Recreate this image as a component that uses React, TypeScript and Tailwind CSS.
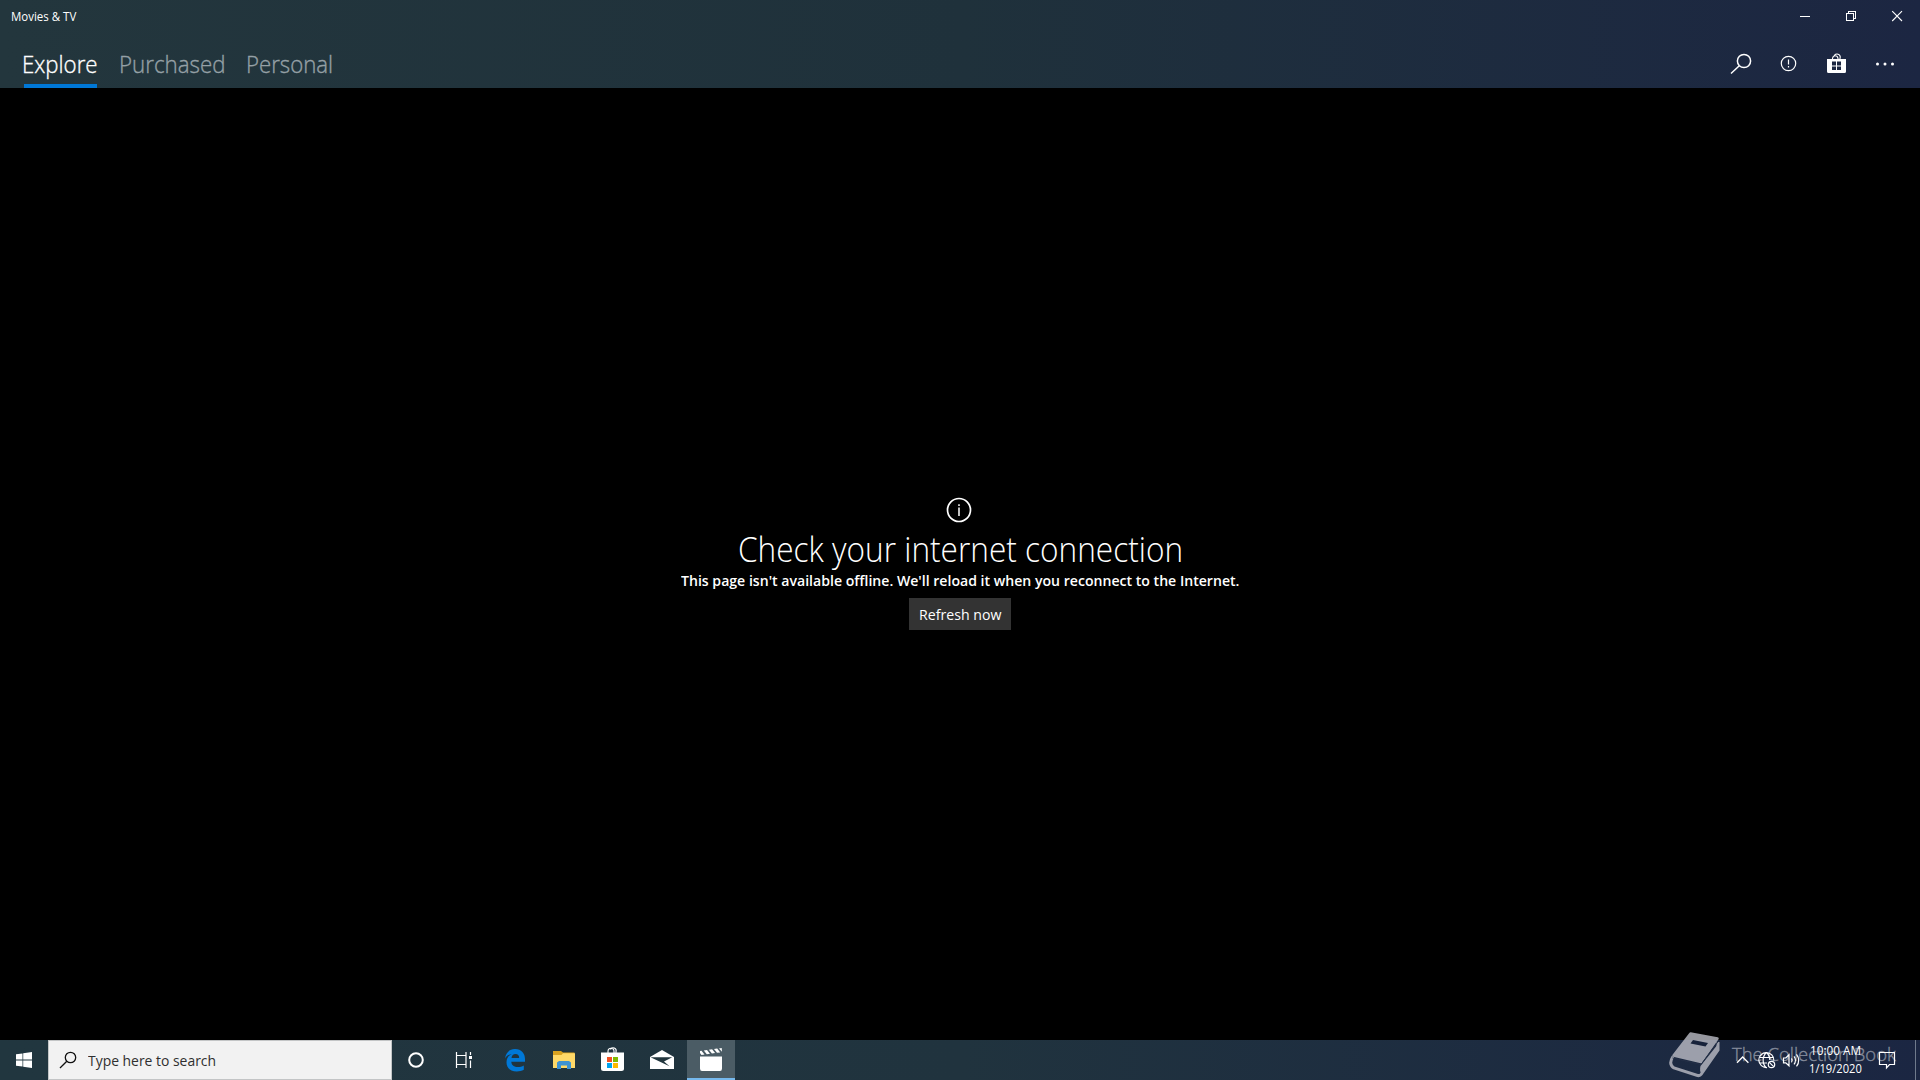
import { useLayoutEffect, useRef, useState } from "react";
import type { ReactNode } from "react";

/* Single-line label condensed or widened to an exact advance width. */
function Label({ width, className = "", children }: { width: number; className?: string; children: ReactNode }) {
  const ref = useRef<HTMLSpanElement>(null);
  const [scale, setScale] = useState(1);
  useLayoutEffect(() => {
    if (ref.current) setScale(width / ref.current.offsetWidth);
  }, [width]);
  return (
    <span className={"block shrink-0 whitespace-nowrap " + className} style={{ width }}>
      <span ref={ref} className="inline-block origin-left align-top" style={{ transform: `scaleX(${scale})` }}>
        {children}
      </span>
    </span>
  );
}

function TitleBar() {
  return (
    <div className="flex h-8 items-center justify-between pl-[11px]">
      <Label width={65} className="pt-px text-[12px] leading-8">Movies &amp; TV</Label>
      <div className="flex h-8">
        <svg width="46" height="32" fill="none" stroke="#fff" shapeRendering="crispEdges">
          <path d="M18 16.5h10" />
        </svg>
        <svg width="46" height="32" fill="none" stroke="#fff" shapeRendering="crispEdges">
          <path d="M18.5 13.5h7v7h-7zM20.5 13v-1.500h7v7h-1.500" />
        </svg>
        <svg width="46" height="32" fill="none" stroke="#fff" strokeWidth="1.1">
          <path d="M18.200 11.200l9.800 9.800M28 11.200l-9.800 9.800" />
        </svg>
      </div>
    </div>
  );
}

function Nav() {
  return (
    <nav className="mt-2 flex h-12 items-start justify-between pl-[22px]">
      <div className="flex text-[24px] leading-[48px] font-light text-[#95a0a6] [-webkit-text-stroke:0.35px]">
        <div className="relative mr-[21px] text-white">
          <Label width={76}>Explore</Label>
          <div className="absolute bottom-0 left-[2px] h-1 w-[73px] bg-[#0078d7]" />
        </div>
        <Label width={106} className="mr-[21px]">Purchased</Label>
        <Label width={87}>Personal</Label>
      </div>
      <div className="flex">
        <svg width="48" height="48" fill="none" stroke="#fff" strokeWidth="1.500">
          <circle cx="28" cy="21" r="6.600" />
          <path d="M23.300 25.800L15 33.500" />
        </svg>
        <svg width="48" height="48" fill="none" stroke="#fff" strokeWidth="1.200">
          <circle cx="24.500" cy="23.500" r="7.200" />
          <path d="M24.500 19.500v5M24.500 26v1.500" />
        </svg>
        <svg width="48" height="48" fill="none">
          <path d="M20.500 20v-1.500a2.800 3.400 0 0 1 5.500 0V20M22 16.200a3 3.200 0 0 1 6 2.300v1.500" stroke="#fff" strokeWidth="1.100" />
          <path fillRule="evenodd" fill="#fff" d="M15 19h19v12.500q0 1.500-1.500 1.500h-16q-1.500 0-1.500-1.500zM20 21.500v4h4v-4zM25 21.500v4h4v-4zM20 26.500v3.500h4v-3.500zM25 26.500v3.500h4v-3.500z" />
        </svg>
        <svg width="60" height="48" fill="#fff">
          <circle cx="17.500" cy="24" r="1.500" />
          <circle cx="25" cy="24" r="1.500" />
          <circle cx="32.500" cy="24" r="1.500" />
        </svg>
      </div>
    </nav>
  );
}

function OfflineNotice() {
  return (
    <main className="flex flex-1 flex-col items-center bg-black pt-[409px]">
      <svg width="26" height="26" fill="none" stroke="#fff" className="mr-[2px]">
        <circle cx="13" cy="13" r="11.500" strokeWidth="1.700" />
        <path d="M13 10.500v8.500M13 7.300v1.700" strokeWidth="1.500" />
      </svg>
      <Label width={445} className="mt-[6px] ml-px text-[34px] leading-10 font-light">Check your internet connection</Label>
      <Label width={558} className="mt-px text-[15px] leading-5 font-semibold">
        This page isn't available offline. We'll reload it when you reconnect to the Internet.
      </Label>
      <button className="mt-2 flex h-8 w-[102px] items-center justify-center bg-[#333] text-[15px] leading-8">
        <Label width={82}>Refresh now</Label>
      </button>
    </main>
  );
}

function PinnedApps() {
  return (
    <div className="flex">
      <svg width="48" height="40" fill="none" stroke="#fff">
        <circle cx="24" cy="20" r="6.800" strokeWidth="2" />
      </svg>
      <svg width="48" height="40" fill="none" stroke="#fff" strokeWidth="1.200">
        <path d="M16.500 12v3.500h9.500V12M16.500 28v-3.500h9.500V28M16.500 15.500v9M26 15.500v9M30.500 12v3M30.500 20.500v7.500" />
        <path d="M29 16h3v3h-3z" fill="#fff" stroke="none" />
      </svg>
      <svg width="51" height="40">
        <path fill="#0078d7" d="M17 18.500C18 12.500 21.500 9 27 9c6.500 0 10 4.500 10 10v2.800H23.300c.2 3.700 3 5.200 6.500 5.200 2.300 0 4.300-.6 6-1.600v4.400c-2 1.100-4.300 1.700-7 1.700-6.500 0-10.300-3.800-10.300-9.300 0-3.900 2.200-6.900 5.500-8.200-3 .2-5.500 1.800-7 4.500zM23.500 18h7.700c0-2.600-1.300-4-3.700-4-2.300 0-3.700 1.600-4 4z" />
      </svg>
      <svg width="49" height="40">
        <path d="M14 11h8l2 1.500h11.500V28H14z" fill="#d9a21f" />
        <path d="M14 15h8.500l1.500-1.800H36V28H14z" fill="#ffd968" />
        <path d="M18 28v-5.500l2-1.500h10l2 1.500V29h-4v-3.500h-6V29h-4z" fill="#3f93d2" />
      </svg>
      <svg width="49" height="40" fill="none">
        <path d="M20 13v-1.500a3 3.200 0 0 1 6 0V13M22.500 9.500a3 3.200 0 0 1 5.500 2.500v1" stroke="#fff" strokeWidth="1.100" />
        <path d="M13 12.500h23V28.500q0 2.500-2.500 2.500h-18q-2.500 0-2.500-2.500z" fill="#fff" />
        <path d="M19 17h5v5h-5z" fill="#f25022" />
        <path d="M25 17h5v5h-5z" fill="#7fba00" />
        <path d="M19 23h5v5h-5z" fill="#00a4ef" />
        <path d="M25 23h5v5h-5z" fill="#ffb900" />
      </svg>
      <svg width="50" height="40">
        <path d="M13 17L25 10l12 7v12H13z" fill="#fff" />
        <path d="M13.500 17.200h21.800l-8.300 4.300 5.500 4.700z" fill="#22363e" />
      </svg>
      <div className="flex h-10 w-12 border-b-2 border-[#76b9ed] bg-[#4b5c65]">
        <svg width="48" height="38" fill="#fff">
          <path d="M13 16.500h22v12q0 2.500-2 2.500H15q-2 0-2-2.500zM13 11l1.500-.3 3 3.800-3 .4L13 13zM16.800 10.400l3.200-.4 3 3.800-3.200.4zM21.900 9.700l3.200-.4 3 3.800-3.200.4zM27 9l3.200-.4 3 3.800-3.200.4zM32 8.400l2.700-.4.300 3.800z" />
        </svg>
      </div>
    </div>
  );
}

function Watermark() {
  return (
    <div className="absolute top-[-10px] left-[1668px] flex h-[50px] opacity-80">
      <svg width="64" height="50" fill="none">
        <path d="M22.500 3.500L49.500 8.500 33 32 5.500 25.500z" fill="#bcbdc6" stroke="#bcbdc6" strokeWidth="2.500" strokeLinejoin="round" />
        <path d="M5 26.500q-5 7.500 1 11.500L29.500 45.500q2.500.5 3.500-1L50 20V12" stroke="#bcbdc6" strokeWidth="3" />
        <path d="M32.500 36L50 14v7L34 44q-3-3-1.500-8z" fill="#bcbdc6" />
        <path d="M4.500 28L33 34.500 50.500 11" stroke="#263149" strokeWidth="1" />
        <path d="M25 10l15 3-2.500 3.500-15-3z" fill="#17213a" />
      </svg>
      <Label width={164} className="mt-[11px] text-[19px] leading-[27px] font-light text-[#9fa4b1] [-webkit-text-stroke:0.35px]">The Collection Book</Label>
    </div>
  );
}

function Tray() {
  return (
    <div className="relative z-10 flex h-10">
      <svg width="26" height="40" fill="none" stroke="#fff" strokeWidth="1.300">
        <path d="M9 22.700l5.700-5.700 5.700 5.700" />
      </svg>
      <svg width="24" height="40" fill="none" stroke="#fff" strokeWidth="1.200">
        <path d="M13 27.500A7.500 7.500 0 1 1 19.800 20.500M12.500 12.500c-4.500 4-4.500 11.500 0 15.500M12.500 12.500c2.200 2 3.300 4.500 3.300 7.500M6 17.500h13.300M6 23h7" />
        <circle cx="17.500" cy="24.500" r="3.200" />
        <path d="M15.300 22.300l4.400 4.400" />
      </svg>
      <svg width="25" height="40" fill="none" stroke="#fff" strokeWidth="1.200">
        <path d="M5.500 18h2.300l3.200-3.200v11L7.800 22.800H5.500zM13.500 18.300q1.400 2 0 4M16 16.300q3 4 0 8M18.500 14.300q4.500 6 0 12" />
      </svg>
      <div className="flex w-[64px] flex-col items-center text-[12px]">
        <Label width={51} className="mt-[2px] leading-[18px]">10:00 AM</Label>
        <Label width={53} className="leading-[18px]">1/19/2020</Label>
      </div>
      <svg width="48" height="40" fill="none" stroke="#fff" strokeWidth="1.200">
        <path d="M12.500 12.500h15v12H22.500L19.500 28v-3.500h-7z" />
      </svg>
      <div className="h-10 w-[5px] border-l border-[#6f7a8c]" />
    </div>
  );
}

function Taskbar() {
  return (
    <footer className="relative flex h-10 justify-between bg-linear-to-r from-[#21363f] via-[#20333e] to-[#1b2642]">
      <div className="flex">
        <svg width="48" height="40" fill="#fff">
          <path d="M16 14.300l6.500-.9v6.200H16zM23.200 13.300L32 12v7.600h-8.800zM16 20.400h6.500v6.200l-6.500-.9zM23.200 20.400H32V28l-8.800-1.300z" />
        </svg>
        <div className="flex w-[344px] border border-[#c3c5c6] bg-[#f2f2f2] text-[#2f2f2f]">
          <svg width="39" height="38" fill="none" stroke="#111" strokeWidth="1.300">
            <circle cx="21.500" cy="16.500" r="5.200" />
            <path d="M17.800 20.300L11 27" />
          </svg>
          <Label width={128} className="text-[15px] leading-[38px]">Type here to search</Label>
        </div>
        <PinnedApps />
      </div>
      <Tray />
      <Watermark />
    </footer>
  );
}

export default function App() {
  return (
    <div className="flex h-[1080px] w-[1920px] flex-col overflow-hidden bg-black font-['Open_Sans',sans-serif] text-white">
      <header className="h-[88px] bg-linear-to-r from-[#23363d] via-[#1f313b] to-[#1c2642]">
        <TitleBar />
        <Nav />
      </header>
      <OfflineNotice />
      <Taskbar />
    </div>
  );
}
